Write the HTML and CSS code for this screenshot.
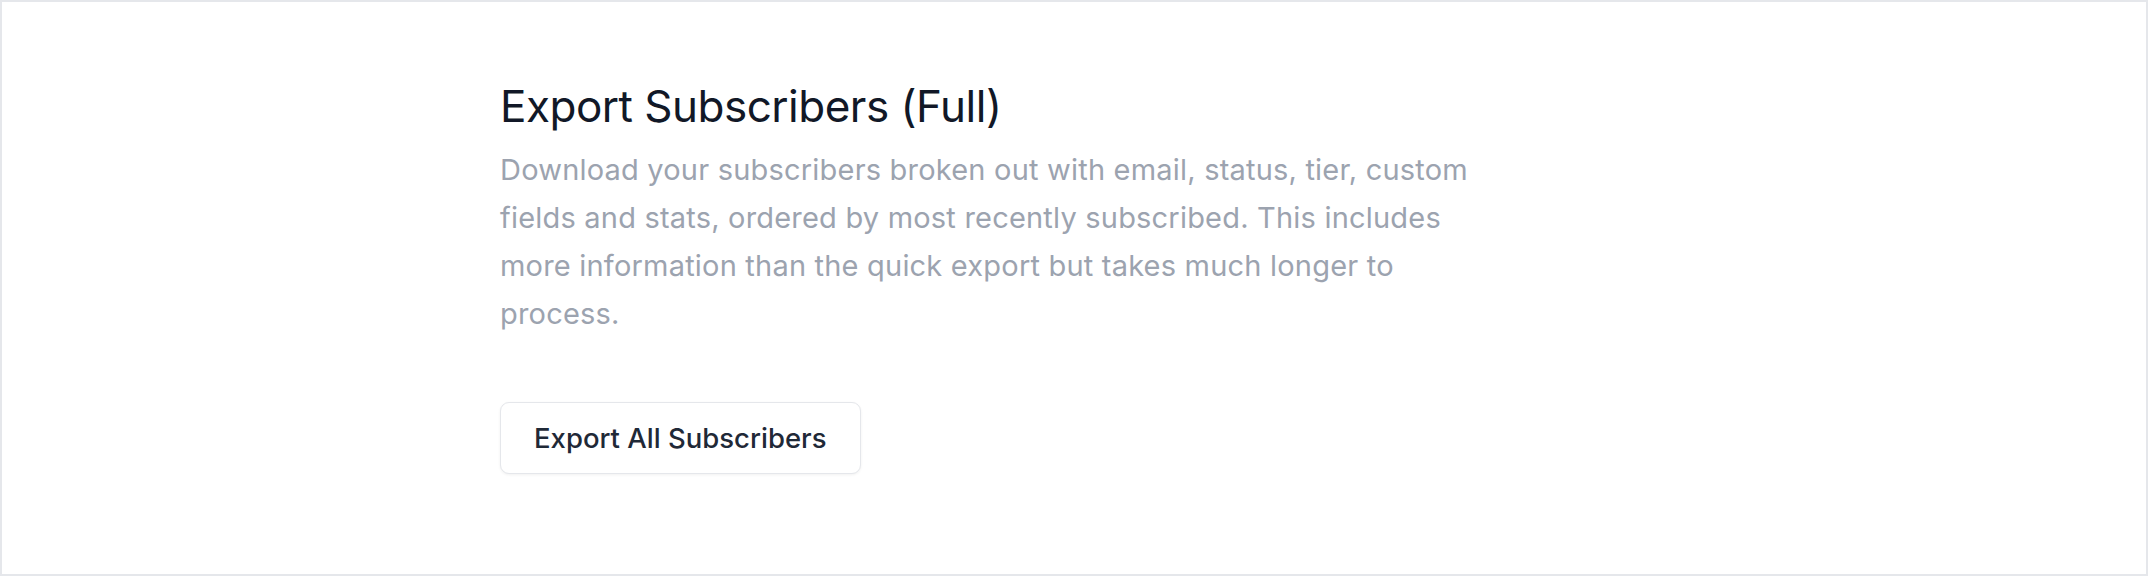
FILE: index.html
```html
<!DOCTYPE html>
<html lang="en">
<head>
<meta charset="utf-8">
<title>Export Subscribers (Full)</title>
<link rel="stylesheet" href="styles.css">
</head>
<body>
<div class="frame">
  <section class="export">
    <h2 class="export-title">Export Subscribers (Full)</h2>
    <p class="export-desc">Download your subscribers broken out with email, status, tier, custom fields and stats, ordered by most recently subscribed. This includes more information than the quick export but takes much longer to process.</p>
    <div class="export-actions">
      <button class="btn" type="button">Export All Subscribers</button>
    </div>
  </section>
</div>
</body>
</html>
```

FILE: styles.css
```css
* { box-sizing: border-box; }
html, body { margin: 0; padding: 0; background: #ffffff; }
body { font-family: Inter, "Noto Sans", sans-serif; }

.frame {
  width: 2148px;
  height: 576px;
  border: 2px solid #e5e7eb;
  background: #ffffff;
  padding: 77px 0 0 498px;
}

.export {
  max-width: 990px;
}

.export-title {
  margin: 0;
  font-size: 44px;
  line-height: 54px;
  font-weight: 400;
  color: #111827;
  letter-spacing: -0.5px;
}

.export-desc {
  margin: 13px 0 0;
  font-size: 29px;
  line-height: 48px;
  font-weight: 400;
  color: #9ca3af;
  letter-spacing: 0.2px;
}

.export-actions {
  margin-top: 64px;
}

.btn {
  font-family: Inter, "Noto Sans", sans-serif;
  font-size: 27.5px;
  line-height: 36px;
  font-weight: 500;
  color: #1f2937;
  background: #ffffff;
  border: 1.5px solid #e5e7eb;
  border-radius: 9px;
  padding: 17px 33px;
  box-shadow: 0 1px 3px rgba(0, 0, 0, 0.06);
  cursor: pointer;
}
```
